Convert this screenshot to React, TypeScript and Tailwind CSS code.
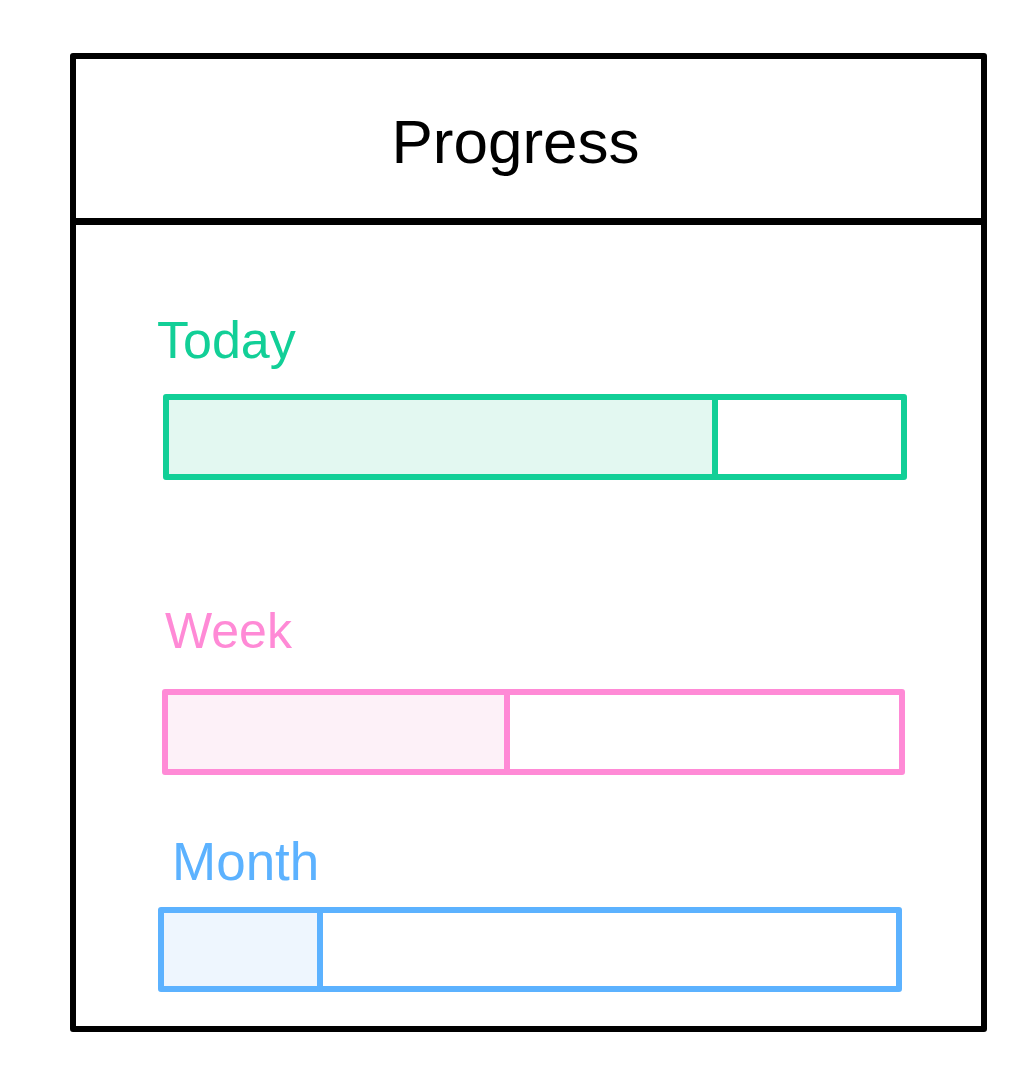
import React from "react";

type Item = {
  label: string;
  pct: number;
  labelCls: string;
  barCls: string;
  fillCls: string;
};

const items: Item[] = [
  {
    label: "Today",
    pct: 75,
    labelCls: "mt-[89px] ml-[81px] text-[52px] text-[#12cf97]",
    barCls: "mt-[28px] ml-[87px] w-[744px] h-[86px] border-[#12cf97]",
    fillCls: "bg-[#e3f8f1] border-[#12cf97]",
  },
  {
    label: "Week",
    pct: 46.8,
    labelCls: "mt-[126px] ml-[89px] text-[50px] text-[#ff8ad6]",
    barCls: "mt-[33px] ml-[86px] w-[743px] h-[86px] border-[#ff8ad6]",
    fillCls: "bg-[#fdf1f8] border-[#ff8ad6]",
  },
  {
    label: "Month",
    pct: 21.7,
    labelCls: "mt-[60px] ml-[96px] text-[53px] text-[#5cb2ff]",
    barCls: "mt-[19px] ml-[82px] w-[744px] h-[85px] border-[#5cb2ff]",
    fillCls: "bg-[#eef6fe] border-[#5cb2ff]",
  },
];

export default function App() {
  return (
    <div
      className="min-h-screen bg-white pt-[53px] pl-[70px]"
      style={{ fontFamily: '"Liberation Sans", Arial, sans-serif' }}
    >
      <div className="w-[917px] h-[979px] border-[6px] border-black rounded-[3px] flex flex-col">
        <div className="h-[166px] border-b-[7px] border-black flex items-center justify-center pt-[6px] pr-[26px]">
          <span className="text-[62px] leading-none text-black">Progress</span>
        </div>
        <div className="flex flex-col items-start">
          {items.map((it) => (
            <React.Fragment key={it.label}>
              <div className={`leading-none ${it.labelCls}`}>{it.label}</div>
              <div className={`border-[6px] rounded-[3px] flex bg-white ${it.barCls}`}>
                <div
                  className={`h-full border-r-[6px] ${it.fillCls}`}
                  style={{ width: `${it.pct}%` }}
                />
              </div>
            </React.Fragment>
          ))}
        </div>
      </div>
    </div>
  );
}
